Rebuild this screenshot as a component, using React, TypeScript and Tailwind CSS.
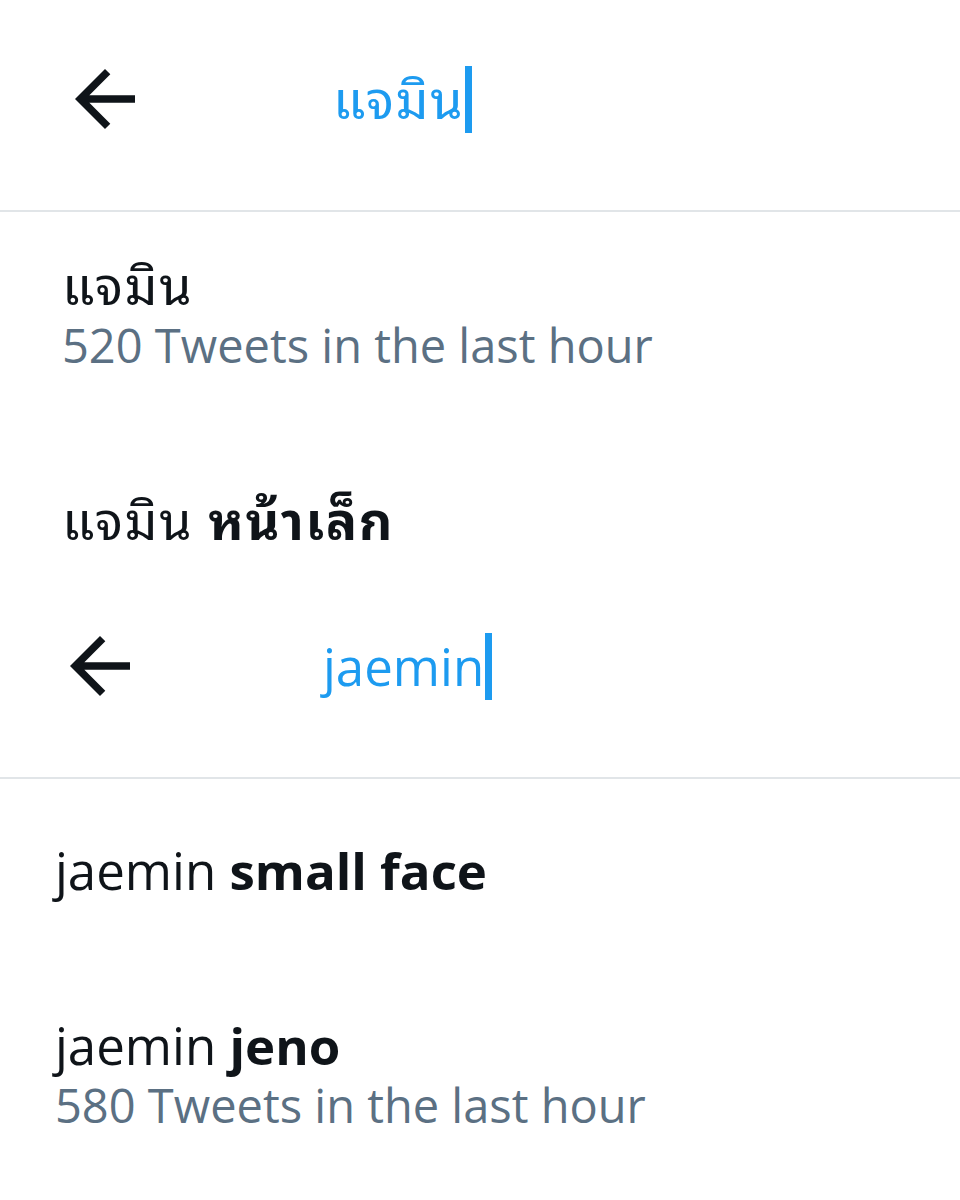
import React from "react";

const font = {
  fontFamily:
    '"Open Sans", "Noto Sans Thai Looped", Loma, Garuda, Waree, Norasi, Kinnari, Tahoma, "Noto Sans Thai", "Noto Sans", sans-serif',
};

function BackArrow({ className }: { className?: string }) {
  return (
    <svg viewBox="0 0 24 24" className={className} fill="#0f1419">
      <path d="M20 11H7.83l5.59-5.59L12 4l-8 8 8 8 1.41-1.41L7.83 13H20v-2z" />
    </svg>
  );
}

type Row = { query: string; extra?: string; count?: string };

function SearchPane({
  query,
  rows,
  arrowMl,
  textMl,
  padX,
  firstPt,
  thai,
  height,
}: {
  query: string;
  rows: Row[];
  arrowMl: string;
  textMl: string;
  padX: string;
  firstPt: string;
  thai?: boolean;
  height?: string;
}) {
  // Thai glyphs come out a bit narrow in the fallback font, so open them up slightly
  const primary = thai
    ? "text-[52px] tracking-[0.03em] leading-[60px]"
    : "text-[51px] leading-[60px]";

  return (
    <section className={`flex flex-col overflow-hidden bg-white ${height ?? ""}`}>
      {/* search bar */}
      <div className="flex h-[210px] shrink-0 items-center pb-[12px]">
        <BackArrow className={`h-[90px] w-[90px] shrink-0 ${arrowMl}`} />
        <div className={`flex items-center ${textMl}`}>
          <span className={`${primary} text-[#1d9bf0]`}>{query}</span>
          <span className="ml-px inline-block h-[67px] w-[7px] bg-[#1d9bf0]" />
        </div>
      </div>
      <div className="h-[2px] shrink-0 bg-[#e1e5e8]" />

      {/* suggestions */}
      <div className={`flex flex-col ${padX}`}>
        {rows.map((r, i) => (
          <div key={i} className={`flex flex-col pb-[54px] ${i === 0 ? firstPt : "pt-[61px]"}`}>
            <p className={`${primary} text-[#0f1419]`}>
              {r.query}
              {r.extra && <span className="font-bold"> {r.extra}</span>}
            </p>
            {r.count && (
              <p className="text-[47px] leading-[60px] text-[#5b7083]">{r.count}</p>
            )}
          </div>
        ))}
      </div>
    </section>
  );
}

export default function App() {
  return (
    <div className="flex h-[1200px] w-[960px] flex-col overflow-hidden bg-white" style={font}>
      <SearchPane
        query="แจมิน"
        thai
        height="h-[567px] shrink-0"
        arrowMl="ml-[60px]"
        textMl="ml-[183px]"
        padX="pl-[62px]"
        firstPt="pt-[43px]"
        rows={[
          { query: "แจมิน", count: "520 Tweets in the last hour" },
          { query: "แจมิน", extra: "หน้าเล็ก" },
        ]}
      />
      <SearchPane
        query="jaemin"
        arrowMl="ml-[55px]"
        textMl="ml-[178px]"
        padX="pl-[55px]"
        firstPt="pt-[61px]"
        rows={[
          { query: "jaemin", extra: "small face" },
          { query: "jaemin", extra: "jeno", count: "580 Tweets in the last hour" },
        ]}
      />
    </div>
  );
}
